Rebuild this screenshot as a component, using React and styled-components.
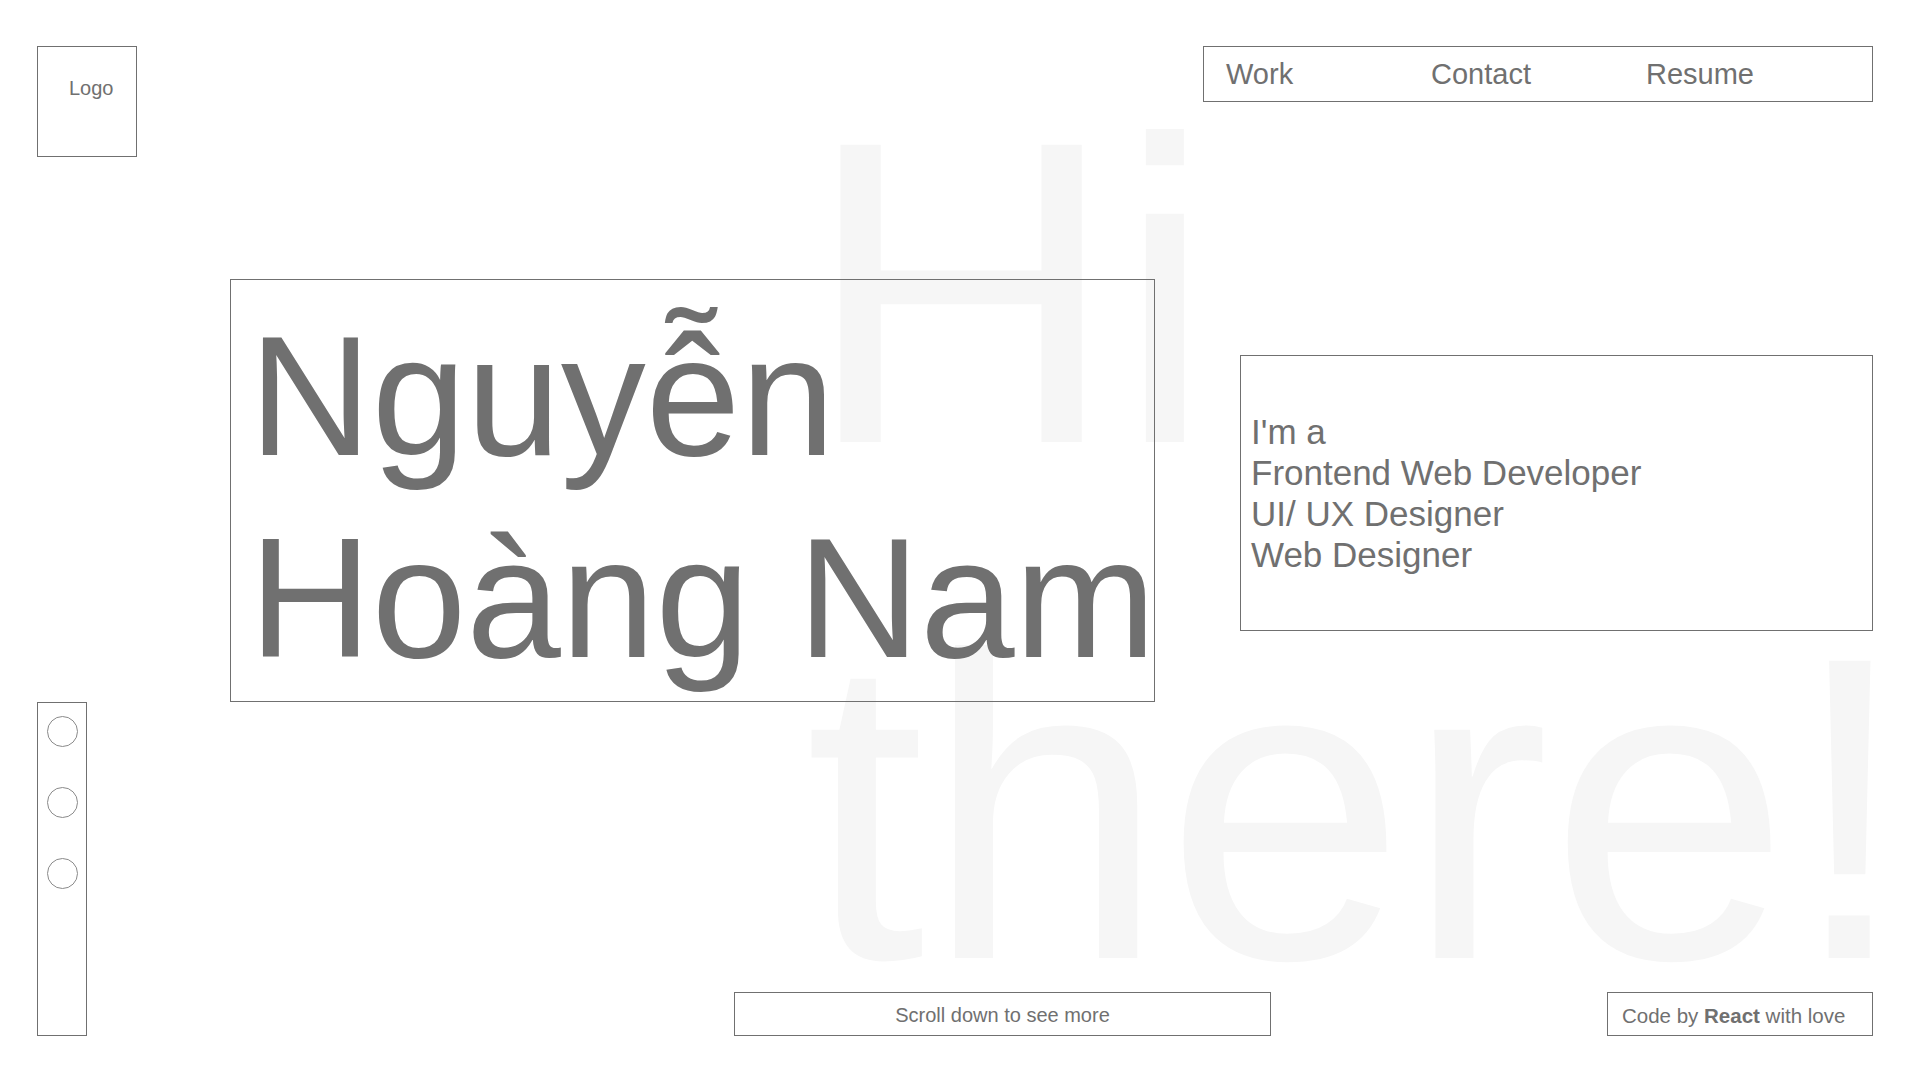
import React from 'react';
import styled, { createGlobalStyle } from 'styled-components';

const GlobalStyle = createGlobalStyle`
  html,
  body {
    margin: 0;
    padding: 0;
    background: #ffffff;
  }
  body {
    font-family: "Liberation Sans", Arial, Helvetica, sans-serif;
    color: #707070;
    overflow: hidden;
  }
  * {
    box-sizing: border-box;
  }
`;

const Page = styled.div`
  position: relative;
  width: 1920px;
  height: 1080px;
  padding: 46px 47px 44px 37px;
  display: flex;
  flex-direction: column;
  overflow: hidden;
`;

// big faded greeting sitting behind everything
const Backdrop = styled.div`
  position: absolute;
  left: 805px;
  top: 35px;
  font-size: 432px;
  line-height: 516px;
  color: #f6f6f6;
  white-space: nowrap;
  pointer-events: none;
  user-select: none;
  z-index: 0;
`;

const Row = styled.div`
  position: relative;
  z-index: 1;
  display: flex;
  align-items: ${p => p.$align || 'flex-start'};
  justify-content: ${p => p.$justify || 'flex-start'};
  margin-top: ${p => p.$top || 0}px;
  padding-left: ${p => p.$indent || 0}px;
`;

const Outline = styled.div`
  border: 1px solid #707070;
`;

const Logo = styled(Outline)`
  width: 100px;
  height: 111px;
  padding: 30px 0 0 31px;
  font-size: 20px;
`;

const Nav = styled(Outline)`
  width: 670px;
  height: 56px;
  margin-left: auto;
  padding-left: 22px;
  display: grid;
  grid-template-columns: 205px 215px auto;
  align-items: center;
`;

const NavLink = styled.a`
  font-size: 29px;
  color: #707070;
  text-decoration: none;
  cursor: pointer;
`;

const NameBox = styled(Outline)`
  width: 925px;
  padding: 15px 0 2px 18px;
  margin: 0;
  font-size: 170px;
  font-weight: 400;
  line-height: 202px;
  white-space: nowrap;
`;

const RoleBox = styled(Outline)`
  width: 633px;
  height: 276px;
  margin-top: 76px;
  padding-left: 10px;
  display: flex;
  flex-direction: column;
  justify-content: center;
  font-size: 35px;
  line-height: 41px;
`;

const Sidebar = styled(Outline)`
  width: 50px;
  height: 334px;
  padding-top: 13px;
  display: flex;
  flex-direction: column;
  align-items: center;
  gap: 40px;
`;

const Dot = styled.span`
  display: block;
  width: 31px;
  height: 31px;
  border: 1px solid #8a8a8a;
  border-radius: 50%;
`;

const Pill = styled(Outline)`
  height: 44px;
  padding-top: 3px;
  display: flex;
  align-items: center;
  font-size: 20px;
  white-space: nowrap;
`;

const ScrollHint = styled(Pill)`
  width: 537px;
  margin-left: 647px;
  justify-content: center;
`;

const Credit = styled(Pill)`
  width: 266px;
  margin-left: auto;
  padding-left: 14px;
  font-size: 20.5px;

  strong {
    font-weight: 700;
  }
`;

const roles = ["I'm a", 'Frontend Web Developer', 'UI/ UX Designer', 'Web Designer'];

const App = () => (
  <>
    <GlobalStyle />
    <Page>
      <Backdrop aria-hidden="true">
        Hi
        <br />
        there!
      </Backdrop>

      <Row>
        <Logo>Logo</Logo>
        <Nav>
          <NavLink>Work</NavLink>
          <NavLink>Contact</NavLink>
          <NavLink>Resume</NavLink>
        </Nav>
      </Row>

      <Row $top={122} $indent={193} $justify="space-between">
        <NameBox as="h1">
          Nguyễn
          <br />
          Hoàng Nam
        </NameBox>
        <RoleBox>
          {roles.map(r => (
            <div key={r}>{r}</div>
          ))}
        </RoleBox>
      </Row>

      <Row $align="flex-end">
        <Sidebar>
          <Dot />
          <Dot />
          <Dot />
        </Sidebar>
        <ScrollHint>Scroll down to see more</ScrollHint>
        <Credit>
          <span>
            Code by <strong>React</strong> with love
          </span>
        </Credit>
      </Row>
    </Page>
  </>
);

export default App;
